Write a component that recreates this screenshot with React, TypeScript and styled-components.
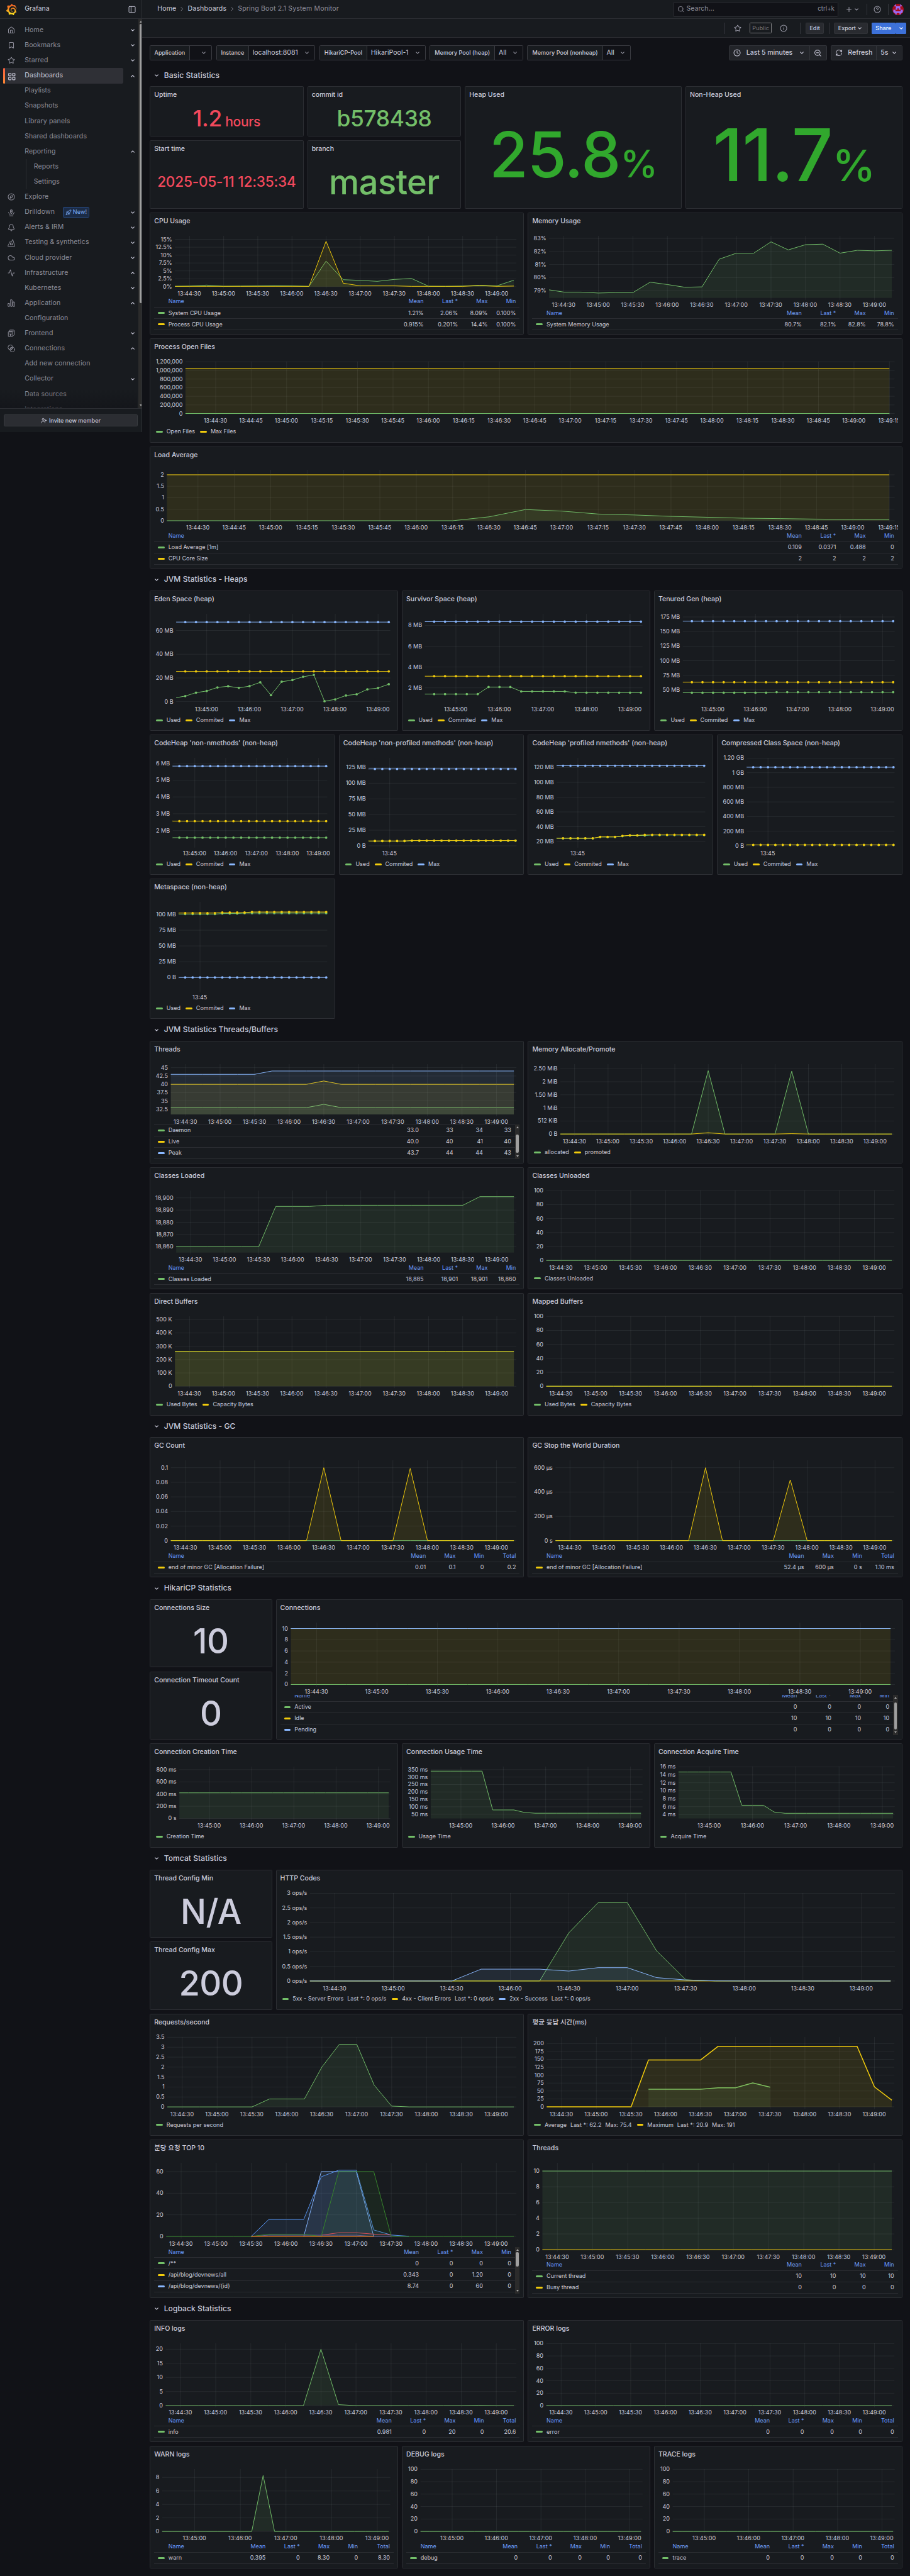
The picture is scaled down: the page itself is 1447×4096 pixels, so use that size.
import React from 'react';
import styled, { createGlobalStyle, css } from 'styled-components';
import {
  Activity,
  Bell,
  Bookmark,
  ChevronRight,
  Clock,
  Cloud,
  Compass,
  Home,
  Info,
  CircleHelp,
  LayoutGrid,
  Plus,
  RefreshCw,
  Rocket,
  Search,
  Star,
  UserPlus,
  ZoomOut,
} from 'lucide-react';
import { SiGrafana } from 'react-icons/si';

/* ---------- theme ---------- */

const c = {
  page: '#111217',
  panel: '#181b1f',
  border: '#2c2e33',
  control: '#3a3b41',
  text: '#ccccdc',
  muted: '#8e8e9a',
  link: '#6e9fff',
  green: '#73bf69',
  yellow: '#f2cc0c',
  blue: '#8ab8ff',
  darkGreen: '#37872d',
  midBlue: '#5794f2',
  red: '#f2495c',
  orange: '#ff780a',
  purple: '#705da0',
};

const GlobalStyle = createGlobalStyle`
  body { margin: 0; background: ${c.page}; overflow: hidden; }
  *, *::before, *::after { box-sizing: border-box; }
`;

const Root = styled.div`
  zoom: 0.753646;
  width: 1920px;
  display: flex;
  align-items: flex-start;
  background: ${c.page};
  color: ${c.text};
  font-family: Inter, 'Noto Sans CJK KR', 'Liberation Sans', sans-serif;
  font-size: 14px;
  line-height: 22px;
`;

/* ---------- small glyphs ---------- */

type ChevronProps = { up?: boolean; color?: string };
const Chevron = ({ up, color = c.text }: ChevronProps) => (
  <svg width="16" height="16" viewBox="0 0 16 16" fill="none" stroke={color} strokeWidth="1.5" strokeLinecap="round" strokeLinejoin="round">
    <path d={up ? 'M5 9.5L8 6.5l3 3' : 'M5 6.5L8 9.500l3-3'} />
  </svg>
);

const Line = ({ children, size = 16 }: { children: React.ReactNode; size?: number }) => (
  <svg width={size} height={size} viewBox="0 0 16 16" fill="none" stroke="currentColor" strokeWidth="1.25" strokeLinecap="round" strokeLinejoin="round">
    {children}
  </svg>
);

const DrilldownIcon = () => (
  <Line>
    <path d="M6.3 2.3L8 1l1.7 1.3v6L8 11.5 6.3 8.3zM6.3 4.6l3.4-1M6.3 7l3.4-1.2M2.2 7.5l1.6 4 1.8.7M13.8 7.5l-1.6 4-1.8.7M4.5 14.8h7" />
  </Line>
);
const K6Icon = () => (
  <Line>
    <path d="M.8 14.8L5.2 5.5l2.3 1.9L11 .9l4.2 13.9z" />
    <path d="M6 8.6v3.6M8 9l-1.9 1.8L8 12.2M10.6 8.6L9.4 10.6" />
    <circle cx="10.3" cy="11.3" r="1" />
  </Line>
);
const BarsIcon = () => (
  <Line>
    <rect x="1" y="8.6" width="3.4" height="6.4" rx=".5" />
    <rect x="6.3" y="1" width="3.4" height="14" rx=".5" />
    <rect x="11.6" y="5.6" width="3.4" height="9.4" rx=".5" />
  </Line>
);
const FrontendIcon = () => (
  <Line>
    <rect x="1.6" y="4.6" width="9.6" height="10.6" rx="1.2" />
    <path d="M4 4.4V2.6c0-.8.5-1.6 1.4-1.6h7.2c.9 0 1.6.7 1.6 1.6v8.2c0 .9-.7 1.6-1.6 1.6h-1.2M1.6 7.2h9.6M4.4 3h9.6" />
    <circle cx="6.4" cy="11.2" r="1.4" fill="currentColor" />
  </Line>
);
const ConnectionsIcon = () => (
  <Line>
    <circle cx="6" cy="5.8" r="5" />
    <circle cx="10" cy="10.2" r="5" />
    <circle cx="8" cy="8" r="1.9" />
  </Line>
);
const DockIcon = () => (
  <Line>
    <rect x="1.4" y="1.8" width="13.2" height="12.4" rx="1" />
    <path d="M5.8 1.8v12.4" />
  </Line>
);
const Avatar = () => (
  <svg width="24" height="24" viewBox="0 0 24 24">
    <clipPath id="avatar-clip">
      <circle cx="12" cy="12" r="12" />
    </clipPath>
    <g clipPath="url(#avatar-clip)">
      <rect width="24" height="24" fill="#a80d1c" />
      <path
        fill="#9a6bf5"
        d="M4.5 1h3v4.500h-3zM16.500 1h3v4.500h-3zM7.500 5h9v4.500h-9zM7 9h3.500v3.500H7zM13.500 9H17v3.500h-3.500zM2 12.500h4.500v6H2zM17.500 12.500H22v6h-4.500zM4 16h16v3.500H4zM6 19h3v4H6zM15 19h3v4h-3z"
      />
    </g>
  </svg>
);

/* ---------- side navigation ---------- */

const Side = styled.aside`
  width: 300px;
  height: 911px;
  flex: none;
  display: flex;
  flex-direction: column;
  background: ${c.panel};
  border-right: 1px solid ${c.border};
`;
const Brand = styled.div`
  height: 40px;
  flex: none;
  display: flex;
  align-items: center;
  padding: 0 12px 0 12px;
  gap: 18px;
  border-bottom: 1px solid ${c.border};
  & > svg:last-child {
    margin-left: auto;
  }
`;
const BrandName = styled.span`
  margin-left: -2px;
`;
const NavViewport = styled.div`
  position: relative;
  height: 823px;
  flex: none;
  display: flex;
  overflow: hidden;
  border-bottom: 1px solid ${c.border};
`;
const NavList = styled.nav`
  flex: 1;
  padding: 8px 4px 0 6px;
`;
const NavFade = styled.div`
  position: absolute;
  left: 0;
  right: 10px;
  bottom: 0;
  height: 40px;
  background: linear-gradient(rgba(17, 18, 23, 0), rgba(17, 18, 23, 0.55));
`;
const NavRow = styled.div`
  height: 32px;
  display: flex;
  align-items: center;
  color: ${c.muted};
`;
const NavLabel = styled.div<{ $active?: boolean; $child?: boolean }>`
  position: relative;
  width: 254px;
  height: 32px;
  display: flex;
  align-items: center;
  padding-left: ${(p) => (p.$child ? 15 : 10)}px;
  border-radius: 3px;
  letter-spacing: 0.01em;
  ${(p) =>
    p.$child &&
    css`
      width: 205px;
      margin-left: 49px;
      border-left: 1px solid ${c.border};
      border-radius: 0;
    `}
  ${(p) =>
    p.$active &&
    css`
      color: ${c.text};
      background: #2f3036;
      &::before {
        content: '';
        position: absolute;
        left: 0;
        top: 0;
        width: 4px;
        height: 100%;
        border-radius: 2px;
        background: linear-gradient(#f55f3e, #ff8833);
      }
    `}
`;
const NavIcon = styled.span`
  width: 36px;
  height: 16px;
  display: flex;
`;
const NewBadge = styled.span`
  display: flex;
  align-items: center;
  gap: 3px;
  height: 22px;
  margin-left: 17px;
  padding: 0 4px;
  border: 1px solid #274a7f;
  border-radius: 2px;
  background: #1b2b45;
  color: #7eb0ff;
  font-size: 12px;
`;
const NavChevron = styled.span`
  display: flex;
  margin-left: 12px;
`;
const ScrollTrack = styled.div<{ $h?: number }>`
  width: 10px;
  flex: none;
  ${(p) => p.$h && `height: ${p.$h}px;`}
  display: flex;
  flex-direction: column;
  align-items: center;
  background: #2b2b2b;
`;
const ScrollArrow = styled.span<{ $down?: boolean }>`
  width: 0;
  height: 0;
  margin: ${(p) => (p.$down ? 'auto 0 4px' : '4px 0 0')};
  border-left: 3.5px solid transparent;
  border-right: 3.5px solid transparent;
  ${(p) => (p.$down ? 'border-top' : 'border-bottom')}: 5px solid #a5a5a5;
`;
const ScrollThumb = styled.span<{ $top: number; $h: number }>`
  width: 6px;
  height: ${(p) => p.$h}px;
  margin-top: ${(p) => p.$top}px;
  border-radius: 3px;
  background: #9f9f9f;
`;
const SideFooter = styled.div`
  flex: 1;
  padding: 12px 8px;
`;
const InviteButton = styled.button`
  width: 100%;
  height: 24px;
  display: flex;
  align-items: center;
  justify-content: center;
  gap: 4px;
  border: 1px solid #393b40;
  border-radius: 2px;
  background: #2b2d32;
  color: ${c.text};
  font: 500 12px Inter, sans-serif;
`;

type NavEntry = { label: string; icon?: React.ReactNode; chev?: 'up' | 'down'; active?: boolean; child?: boolean; badge?: boolean };
const nav: NavEntry[] = [
  { label: 'Home', icon: <Home size={16} />, chev: 'down' },
  { label: 'Bookmarks', icon: <Bookmark size={16} />, chev: 'down' },
  { label: 'Starred', icon: <Star size={16} />, chev: 'down' },
  { label: 'Dashboards', icon: <LayoutGrid size={18} />, chev: 'up', active: true },
  { label: 'Playlists' },
  { label: 'Snapshots' },
  { label: 'Library panels' },
  { label: 'Shared dashboards' },
  { label: 'Reporting', chev: 'up' },
  { label: 'Reports', child: true },
  { label: 'Settings', child: true },
  { label: 'Explore', icon: <Compass size={16} /> },
  { label: 'Drilldown', icon: <DrilldownIcon />, chev: 'down', badge: true },
  { label: 'Alerts & IRM', icon: <Bell size={16} />, chev: 'down' },
  { label: 'Testing & synthetics', icon: <K6Icon />, chev: 'down' },
  { label: 'Cloud provider', icon: <Cloud size={16} />, chev: 'down' },
  { label: 'Infrastructure', icon: <Activity size={16} />, chev: 'up' },
  { label: 'Kubernetes', chev: 'down' },
  { label: 'Application', icon: <BarsIcon />, chev: 'up' },
  { label: 'Configuration' },
  { label: 'Frontend', icon: <FrontendIcon />, chev: 'down' },
  { label: 'Connections', icon: <ConnectionsIcon />, chev: 'up' },
  { label: 'Add new connection' },
  { label: 'Collector', chev: 'down' },
  { label: 'Data sources' },
  { label: 'Integrations' },
];

const Sidebar = () => (
  <Side>
    <Brand>
      <svg width="0" height="0" style={{ position: 'absolute' }}>
        <linearGradient id="brand" x1="0" y1="1" x2="0" y2="0">
          <stop offset="0" stopColor="#fcee1f" />
          <stop offset=".5" stopColor="#f7931e" />
          <stop offset="1" stopColor="#f15b2a" />
        </linearGradient>
      </svg>
      <SiGrafana size={24} fill="url(#brand)" />
      <BrandName>Grafana</BrandName>
      <DockIcon />
    </Brand>
    <NavViewport>
      <NavList>
        {nav.map((n) => (
          <NavRow key={n.label}>
            <NavLabel $active={n.active} $child={n.child}>
              {!n.child && <NavIcon>{n.icon}</NavIcon>}
              {n.label}
              {n.badge && (
                <NewBadge>
                  <Rocket size={13} />
                  New!
                </NewBadge>
              )}
            </NavLabel>
            {n.chev && (
              <NavChevron>
                <Chevron up={n.chev === 'up'} />
              </NavChevron>
            )}
          </NavRow>
        ))}
      </NavList>
      <ScrollTrack>
        <ScrollArrow />
        <ScrollThumb $top={3} $h={589} />
        <ScrollArrow $down />
      </ScrollTrack>
      <NavFade />
    </NavViewport>
    <SideFooter>
      <InviteButton>
        <UserPlus size={13} />
        Invite new member
      </InviteButton>
    </SideFooter>
  </Side>
);

/* ---------- top bars ---------- */

const Main = styled.main`
  flex: 1;
  min-width: 0;
  display: flex;
  flex-direction: column;
`;
const Bar = styled.header<{ $right?: number }>`
  height: 40px;
  display: flex;
  align-items: center;
  padding: 0 ${(p) => p.$right ?? 13}px 0 32px;
  background: ${c.panel};
  border-bottom: 1px solid ${c.border};
`;
const Crumbs = styled.div`
  display: flex;
  align-items: center;
  gap: 5px;
  margin-right: auto;
  svg {
    color: ${c.muted};
  }
`;
const Crumb = styled.span<{ $current?: boolean }>`
  color: ${(p) => (p.$current ? c.muted : c.text)};
  letter-spacing: 0.016em;
`;
const SearchBox = styled.div`
  width: 350px;
  height: 32px;
  display: flex;
  align-items: center;
  gap: 5px;
  padding: 0 7px 0 8px;
  border: 1px solid ${c.border};
  border-radius: 2px;
  background: ${c.page};
  color: ${c.muted};
`;
const Shortcut = styled.span`
  margin-left: auto;
  font-size: 13px;
`;
const Divider = styled.span<{ $l: number; $r: number }>`
  width: 1px;
  height: 24px;
  margin: 0 ${(p) => p.$r}px 0 ${(p) => p.$l}px;
  background: #34363c;
`;
const IconSlot = styled.span<{ $l?: number }>`
  display: flex;
  align-items: center;
  margin-left: ${(p) => p.$l ?? 0}px;
  color: #9d9dab;
`;
const Spacer = styled.span`
  margin-left: auto;
`;
const PublicTag = styled.span`
  height: 22px;
  margin: 0 17px 0 18px;
  padding: 0 4px;
  border: 1px solid #7f7f82;
  border-radius: 2px;
  color: #77777b;
  font-size: 12px;
  line-height: 20px;
  letter-spacing: 0.01em;
`;
const Button = styled.button<{ $primary?: boolean; $l?: number; $w: number }>`
  width: ${(p) => p.$w}px;
  height: 24px;
  margin-left: ${(p) => p.$l ?? 0}px;
  padding: 0;
  display: flex;
  align-items: center;
  justify-content: center;
  border: ${(p) => (p.$primary ? '0' : '1px solid #313338')};
  border-radius: 2px;
  background: ${(p) => (p.$primary ? '#3d71d9' : '#292b30')};
  color: ${(p) => (p.$primary ? '#fff' : c.text)};
  font: 500 12px Inter, sans-serif;
`;
const Controls = styled.div`
  height: 32px;
  margin: 16px 16px 16px;
  display: flex;
  gap: 9px;
`;
const Variable = styled.div`
  display: flex;
  height: 32px;
  border: 1px solid ${c.control};
  border-radius: 2px;
`;
const VarLabel = styled.span<{ $w: number }>`
  width: ${(p) => p.$w}px;
  display: flex;
  align-items: center;
  justify-content: center;
  background: ${c.panel};
  border-right: 1px solid ${c.control};
  font-size: 12px;
  font-weight: 500;
  white-space: nowrap;
`;
const VarValue = styled.span<{ $w: number }>`
  width: ${(p) => p.$w}px;
  padding: 0 8px;
  display: flex;
  align-items: center;
  justify-content: space-between;
`;
const Picker = styled.div<{ $auto?: boolean }>`
  display: flex;
  height: 32px;
  margin-left: ${(p) => (p.$auto ? 'auto' : '-1px')};
  border: 1px solid #33353b;
  border-radius: 2px;
  background: #222429;
`;
const PickerPart = styled.span<{ $w: number; $divide?: boolean }>`
  width: ${(p) => p.$w}px;
  padding: 0 8px;
  display: flex;
  align-items: center;
  justify-content: space-between;
  border-left: ${(p) => (p.$divide ? '1px solid #33353b' : '0')};
  font-weight: 500;
  white-space: nowrap;
`;

const variables = [
  { label: 'Application', value: '', lw: 83, vw: 46 },
  { label: 'Instance', value: 'localhost:8081', lw: 67, vw: 139 },
  { label: 'HikariCP-Pool', value: 'HikariPool-1', lw: 99, vw: 122 },
  { label: 'Memory Pool (heap)', value: 'All', lw: 136, vw: 58 },
  { label: 'Memory Pool (nonheap)', value: 'All', lw: 158, vw: 58 },
];

const TopBars = () => (
  <>
    <Bar>
      <Crumbs>
        <Crumb>Home</Crumb>
        <ChevronRight size={14} />
        <Crumb>Dashboards</Crumb>
        <ChevronRight size={14} />
        <Crumb $current>Spring Boot 2.1 System Monitor</Crumb>
      </Crumbs>
      <SearchBox>
        <Search size={15} />
        Search...
        <Shortcut>ctrl+k</Shortcut>
      </SearchBox>
      <IconSlot $l={14}>
        <Plus size={16} />
        <Chevron color="#9d9dab" />
      </IconSlot>
      <Divider $l={13} $r={14} />
      <IconSlot>
        <CircleHelp size={16} />
      </IconSlot>
      <Divider $l={14} $r={9} />
      <Avatar />
    </Bar>
    <Bar $right={8}>
      <Spacer />
      <Divider $l={0} $r={18} />
      <IconSlot>
        <Star size={16} />
      </IconSlot>
      <PublicTag>Public</PublicTag>
      <IconSlot>
        <Info size={16} />
      </IconSlot>
      <Divider $l={26} $r={12} />
      <Button $w={38}>Edit</Button>
      <Divider $l={12} $r={8} />
      <Button $w={72}>
        Export
        <Chevron />
      </Button>
      <Button $primary $l={8} $w={50}>
        Share
      </Button>
      <Button $primary $l={1} $w={22}>
        <Chevron color="#fff" />
      </Button>
    </Bar>
    <Controls>
      {variables.map((v) => (
        <Variable key={v.label}>
          <VarLabel $w={v.lw}>{v.label}</VarLabel>
          <VarValue $w={v.vw}>
            <span>{v.value}</span>
            <Chevron color={c.muted} />
          </VarValue>
        </Variable>
      ))}
      <Picker $auto>
        <PickerPart $w={169}>
          <Clock size={16} />
          Last 5 minutes
          <Chevron />
        </PickerPart>
        <PickerPart $w={35} $divide>
          <ZoomOut size={17} />
        </PickerPart>
      </Picker>
      <Picker>
        <PickerPart $w={95}>
          <RefreshCw size={16} />
          Refresh
        </PickerPart>
        <PickerPart $w={54} $divide>
          5s
          <Chevron />
        </PickerPart>
      </Picker>
    </Controls>
  </>
);

/* ---------- dashboard grid ---------- */

const COL = 66.5;
const ROW = 38;
const GAP = 8;

/* the track and gap fractions keep the zoomed sizes from rounding down row after row */
const Grid = styled.div`
  width: 1588px;
  margin: 0 0 16px 16px;
  display: grid;
  grid-template-columns: repeat(24, 58.5px);
  grid-auto-rows: 30.005px;
  gap: ${GAP + 0.01}px;
`;
const Section = styled.h2<{ $y: number }>`
  grid-column: 1 / 25;
  grid-row: ${(p) => p.$y + 1};
  margin: 0;
  padding-left: 6px;
  display: flex;
  align-items: center;
  gap: 8px;
  font-size: 16px;
  font-weight: 500;
  letter-spacing: 0.005em;
`;
type Pos = { x: number; y: number; w: number; h: number };
const Card = styled.section<{ $p: Pos }>`
  grid-column: ${(p) => p.$p.x + 1} / span ${(p) => p.$p.w};
  grid-row: ${(p) => p.$p.y + 1} / span ${(p) => p.$p.h};
  min-width: 0;
  min-height: 0;
  display: flex;
  flex-direction: column;
  border: 1px solid ${c.border};
  border-radius: 2px;
  background: ${c.panel};
  overflow: hidden;
`;
const CardTitle = styled.h3`
  height: 32px;
  flex: none;
  margin: 0;
  padding: 0 8px;
  font-size: 14px;
  font-weight: 500;
  line-height: 34px;
  white-space: nowrap;
`;
const CardBody = styled.div`
  height: 0;
  flex: 1;
  padding: 8px 8px;
  display: flex;
  flex-direction: column;
`;
const StatBody = styled.div<{ $color: string; $size: number }>`
  flex: 1;
  display: flex;
  align-items: center;
  justify-content: center;
  color: ${(p) => p.$color};
  font-size: ${(p) => p.$size}px;
  font-weight: 500;
  line-height: 1;
  letter-spacing: -0.01em;
  white-space: pre;
`;
const Unit = styled.span<{ $size: number }>`
  font-size: ${(p) => p.$size}px;
`;

/* ---------- legends ---------- */

const Swatch = styled.span<{ $color: string }>`
  width: 14px;
  height: 4px;
  flex: none;
  border-radius: 2px;
  background: ${(p) => p.$color};
`;
const LegendList = styled.div`
  height: 28px;
  flex: none;
  padding-left: 4px;
  display: flex;
  align-items: center;
  gap: 11px;
  font-size: 12px;
`;
const LegendItem = styled.span`
  display: flex;
  align-items: center;
  gap: 8px;
  white-space: nowrap;
`;
const LegendFrame = styled.div<{ $h: number }>`
  height: ${(p) => p.$h}px;
  flex: none;
  display: flex;
  overflow: hidden;
`;
const LegendTable = styled.div<{ $shift: number }>`
  flex: 1;
  margin-top: ${(p) => -p.$shift}px;
  font-size: 12px;
`;
const WIDTHS: Record<string, number> = { Mean: 60, 'Last *': 72.3, Max: 62.8, Min: 59.7, Total: 67.5 };
const LegendRow = styled.div<{ $cols: string[]; $head?: boolean }>`
  height: 24px;
  display: grid;
  grid-template-columns: 8px 22px 1fr ${(p) => p.$cols.map((k) => `${WIDTHS[k]}px`).join(' ')};
  align-items: center;
  padding-right: 8px;
  border-bottom: 1px solid #2b2d32;
  color: ${(p) => (p.$head ? c.link : c.text)};
  white-space: nowrap;
  & > span:nth-child(n + 4) {
    text-align: right;
  }
`;

/* ---------- chart ---------- */

type Series = { color: string; data: (number | null)[]; fill?: boolean; width?: number };
type Legend =
  | { kind: 'list'; items: [string, string][] }
  | { kind: 'table'; cols: string[]; rows: [string, string, ...string[]][]; view?: number; shift?: number; thumb?: [number, number] };
type ChartSpec = {
  left: number;
  /* first and last y tick: value, offset from the panel top */
  y: [number, number, number, number];
  labels: string[];
  step: number;
  dots?: boolean;
  series: Series[];
};

const T0 = 2.2;
const clock = (s: number, short: boolean) => {
  const t = 44 * 60 + 15 + s;
  const mm = Math.floor(t / 60);
  const ss = String(t % 60).padStart(2, '0');
  return short ? `13:${mm}` : `13:${mm}:${ss}`;
};

const Svg = styled.svg`
  display: block;
  flex: none;
  text {
    font-family: Inter, sans-serif;
    font-size: 12px;
    fill: ${c.text};
  }
`;

const Plot = ({ id, spec, w, h, axis }: { id: string; spec: ChartSpec; w: number; h: number; axis: number }) => {
  const left = spec.left - 9;
  const right = w - 7.5;
  const top = 8;
  const bottom = h - axis;
  const [v1, y1, v2, y2] = spec.y;
  const px = (i: number) => left + ((15 * i - T0) / 300) * (right - left);
  const py = (v: number) => y1 - 41 + ((v1 - v) / (v1 - v2)) * (y2 - y1);
  const n = spec.labels.length;
  const short = spec.step === 0;
  const ticks: number[] = [];
  if (short) ticks.push(45);
  else for (let s = 15; s <= 300; s += 15) if ((s + 15) % spec.step === 0) ticks.push(s);

  const runs = (data: (number | null)[]) => {
    const out: [number, number][][] = [];
    let cur: [number, number][] = [];
    data.forEach((v, i) => {
      if (v === null) {
        if (cur.length) out.push(cur);
        cur = [];
      } else cur.push([px(i), py(v)]);
    });
    if (cur.length) out.push(cur);
    return out;
  };
  const path = (r: [number, number][]) => 'M' + r.map(([x, y]) => `${x.toFixed(1)} ${y.toFixed(1)}`).join('L');

  return (
    <Svg width={w} height={h}>
      <clipPath id={id}>
        <rect x={left} y={0} width={right - left + 6} height={bottom + 4} />
      </clipPath>
      {spec.labels.map((l, i) => {
        const y = y1 - 41 + ((y2 - y1) * i) / (n - 1);
        return (
          <g key={l}>
            <line x1={left} x2={right} y1={y} y2={y} stroke="rgba(240,250,255,.09)" />
            <text x={left - 6} y={y + 4} textAnchor="end">
              {l}
            </text>
          </g>
        );
      })}
      {ticks.map((s) => (
        <g key={s}>
          <line x1={px(s / 15)} x2={px(s / 15)} y1={top} y2={bottom + 4} stroke="rgba(240,250,255,.09)" />
          <text x={px(s / 15) - 0.5} y={bottom + 19.5} textAnchor="middle">
            {clock(s, short)}
          </text>
        </g>
      ))}
      <g clipPath={`url(#${id})`}>
        {spec.series.map((s, k) => (
          <g key={k}>
            {runs(s.data).map((r, j) => (
              <g key={j}>
                {s.fill !== false && !spec.dots && (
                  <path d={`${path(r)}L${r[r.length - 1][0]} ${bottom}L${r[0][0]} ${bottom}Z`} fill={s.color} fillOpacity=".1" />
                )}
                <path d={path(r)} fill="none" stroke={s.color} strokeWidth={s.width ?? 1.3} strokeLinejoin="round" />
                {spec.dots && r.map(([x, y], i) => <circle key={i} cx={x} cy={y} r="2.5" fill={s.color} />)}
              </g>
            ))}
          </g>
        ))}
      </g>
    </Svg>
  );
};

const LegendView = ({ legend }: { legend: Legend }) => {
  if (legend.kind === 'list') {
    return (
      <LegendList>
        {legend.items.map(([color, label]) => (
          <LegendItem key={label}>
            <Swatch $color={color} />
            {label.split('|').map((part) => (
              <span key={part}>{part}</span>
            ))}
          </LegendItem>
        ))}
      </LegendList>
    );
  }
  const h = legend.view ?? 24 * (legend.rows.length + 1);
  return (
    <LegendFrame $h={h}>
      <LegendTable $shift={legend.shift ?? 0}>
        <LegendRow $cols={legend.cols} $head>
          <span />
          <span />
          <span>Name</span>
          {legend.cols.map((k) => (
            <span key={k}>{k}</span>
          ))}
        </LegendRow>
        {legend.rows.map(([color, name, ...vals]) => (
          <LegendRow key={name} $cols={legend.cols}>
            <span />
            <Swatch $color={color} />
            <span>{name}</span>
            {vals.map((v, i) => (
              <span key={i}>{v}</span>
            ))}
          </LegendRow>
        ))}
      </LegendTable>
      {legend.thumb && (
        <ScrollTrack $h={h}>
          <ScrollArrow />
          <ScrollThumb $top={legend.thumb[0] - 9} $h={legend.thumb[1]} />
          <ScrollArrow $down />
        </ScrollTrack>
      )}
    </LegendFrame>
  );
};

const ChartPanel = ({ title, p, spec, legend }: { title: string; p: Pos; spec: ChartSpec; legend: Legend }) => {
  const lh = legend.kind === 'list' ? 28 : legend.view ?? 24 * (legend.rows.length + 1);
  const w = COL * p.w - GAP - 18;
  const h = ROW * p.h - GAP - 50 - lh;
  return (
    <Card $p={p}>
      <CardTitle>{title}</CardTitle>
      <CardBody>
        <Plot id={`plot-${p.x}-${p.y}`} spec={spec} w={w} h={h} axis={legend.kind === 'list' ? 24.5 : 21} />
        <LegendView legend={legend} />
      </CardBody>
    </Card>
  );
};

const StatPanel = ({ title, p, color = c.text, size, value, unit, unitSize = 0 }: { title: string; p: Pos; color?: string; size: number; value: string; unit?: string; unitSize?: number }) => (
  <Card $p={p}>
    <CardTitle>{title}</CardTitle>
    <StatBody $color={color} $size={size}>
      <span>
        {value}
        {unit && <Unit $size={unitSize}>{unit}</Unit>}
      </span>
    </StatBody>
  </Card>
);

/* ---------- data: one sample every 15 s, 21 samples ---------- */

const N = 21;
const flat = (v: number) => Array<number>(N).fill(v);
/* steps([[value, count], ...]): a missing count fills up to the last sample */
const steps = (parts: [number, number?][]) =>
  parts.reduce<number[]>((out, [v, n]) => out.concat(Array<number>(n ?? N - out.length).fill(v)), []);
const spikes = (base: number, at: Record<number, number>) => flat(base).map((v, i) => at[i] ?? v);
const only = (from: number, vals: number[]) =>
  Array.from({ length: N }, (_, i) => (i >= from && i < from + vals.length ? vals[i - from] : null));

const g = (data: (number | null)[], extra = {}): Series => ({ color: c.green, data, ...extra });
const y = (data: (number | null)[], extra = {}): Series => ({ color: c.yellow, data, ...extra });
const b = (data: (number | null)[], extra = {}): Series => ({ color: c.blue, data, ...extra });

const M4 = ['Mean', 'Last *', 'Max', 'Min'];
const M5 = ['Mean', 'Last *', 'Max', 'Min', 'Total'];
const MT = ['Mean', 'Max', 'Min', 'Total'];
const heapLegend: Legend = { kind: 'list', items: [[c.green, 'Used'], [c.yellow, 'Commited'], [c.blue, 'Max']] };
const hundred = ['100', '80', '60', '40', '20', '0'];

type PanelDef = { title: string; p: Pos; spec: ChartSpec; legend: Legend };
const charts: PanelDef[] = [
  {
    title: 'CPU Usage',
    p: { x: 0, y: 8, w: 12, h: 7 },
    spec: {
      left: 53, y: [15, 56.3, 0, 156.2], step: 30,
      labels: ['15%', '12.5%', '10%', '7.5%', '5%', '2.5%', '0%'],
      series: [
        g([0.1, 0.2, 0.5, 0.15, 0.2, 0.25, 0.35, 0.25, 0.1, 8.09, 2.2, 2, 1.7, 2.3, 2.6, 0.15, 0.1, 0.2, 0.45, 0.25, 2.06]),
        y(spikes(0.1, { 9: 14.4, 10: 1.1, 11: 0.25, 12: 0.25, 13: 0.25, 18: 0.35, 20: 0.2 })),
      ],
    },
    legend: { kind: 'table', cols: M4, rows: [[c.green, 'System CPU Usage', '1.21%', '2.06%', '8.09%', '0.100%'], [c.yellow, 'Process CPU Usage', '0.915%', '0.201%', '14.4%', '0.100%']] },
  },
  {
    title: 'Memory Usage',
    p: { x: 12, y: 8, w: 12, h: 7 },
    spec: {
      left: 45, y: [83, 54.4, 79, 164.6], step: 30,
      labels: ['83%', '82%', '81%', '80%', '79%'],
      series: [g([79.09, 78.89, 78.89, 78.82, 78.85, 78.85, 79.65, 79.47, 79.26, 79.29, 81.41, 81.87, 81.87, 82.74, 82.12, 82.52, 82.56, 81.87, 82.09, 82.05, 82.09])],
    },
    legend: { kind: 'table', cols: M4, rows: [[c.green, 'System Memory Usage', '80.7%', '82.1%', '82.8%', '78.8%']] },
  },
  {
    title: 'Process Open Files',
    p: { x: 0, y: 15, w: 24, h: 6 },
    spec: {
      left: 75.2, y: [1200000, 49.3, 0, 158.5], step: 15,
      labels: ['1,200,000', '1,000,000', '800,000', '600,000', '400,000', '200,000', '0'],
      series: [y(flat(1048576)), g(flat(0))],
    },
    legend: { kind: 'list', items: [[c.green, 'Open Files'], [c.yellow, 'Max Files']] },
  },
  {
    title: 'Load Average',
    p: { x: 0, y: 21, w: 24, h: 7 },
    spec: {
      left: 36.1, y: [2, 59.5, 0, 156.4], step: 15,
      labels: ['2', '1.5', '1', '0.5', '0'],
      series: [y(flat(2)), g([0, 0, 0, 0, 0, 0, 0, 0, 0, 0.17, 0.488, 0.42, 0.29, 0.25, 0.19, 0.15, 0.11, 0.09, 0.07, 0.06, 0.04])],
    },
    legend: { kind: 'table', cols: M4, rows: [[c.green, 'Load Average [1m]', '0.109', '0.0371', '0.488', '0'], [c.yellow, 'CPU Core Size', '2', '2', '2', '2']] },
  },
  {
    title: 'Eden Space (heap)',
    p: { x: 0, y: 29, w: 8, h: 8 },
    spec: {
      left: 55.6, y: [60, 84.2, 0, 234.3], step: 60, dots: true,
      labels: ['60 MB', '40 MB', '20 MB', '0 B'],
      series: [
        g([3.1, 4.7, 7.6, 9, 12, 13, 11.6, 13.1, 16.3, 5.5, 16.8, 18.2, 21, 22.6, 0.4, 1.9, 5.2, 6.2, 10.4, 11.5, 14.7]),
        y(flat(25.5)),
        b(flat(67.1)),
      ],
    },
    legend: heapLegend,
  },
  {
    title: 'Survivor Space (heap)',
    p: { x: 8, y: 29, w: 8, h: 8 },
    spec: {
      left: 48.3, y: [8, 73.4, 2, 205.2], step: 60, dots: true,
      labels: ['8 MB', '6 MB', '4 MB', '2 MB'],
      series: [g(steps([[1.4, 6], [2.08, 3], [1.66, 5], [1.54]])), y(flat(3.12)), b(flat(8.36))],
    },
    legend: heapLegend,
  },
  {
    title: 'Tenured Gen (heap)',
    p: { x: 16, y: 29, w: 8, h: 8 },
    spec: {
      left: 60.5, y: [175, 55.6, 50, 209.5], step: 60, dots: true,
      labels: ['175 MB', '150 MB', '125 MB', '100 MB', '75 MB', '50 MB'],
      series: [g(steps([[45.2, 9], [46.1]])), y(flat(63.2)), b(flat(167.8))],
    },
    legend: heapLegend,
  },
  {
    title: "CodeHeap 'non-nmethods' (non-heap)",
    p: { x: 0, y: 37, w: 6, h: 8 },
    spec: {
      left: 48.4, y: [6, 60.4, 2, 202.5], step: 60, dots: true,
      labels: ['6 MB', '5 MB', '4 MB', '3 MB', '2 MB'],
      series: [g(flat(1.58)), y(flat(2.56)), b(flat(5.83))],
    },
    legend: heapLegend,
  },
  {
    title: "CodeHeap 'non-profiled nmethods' (non-heap)",
    p: { x: 6, y: 37, w: 6, h: 8 },
    spec: {
      left: 62.2, y: [125, 69.5, 0, 234.6], step: 0, dots: true,
      labels: ['125 MB', '100 MB', '75 MB', '50 MB', '25 MB', '0 B'],
      series: [g(steps([[7.5, 6], [8.2]])), y(steps([[7.7, 6], [8.4]])), b(flat(122.8))],
    },
    legend: heapLegend,
  },
  {
    title: "CodeHeap 'profiled nmethods' (non-heap)",
    p: { x: 12, y: 37, w: 6, h: 8 },
    spec: {
      left: 61, y: [120, 69.5, 20, 225.5], step: 0, dots: true,
      labels: ['120 MB', '100 MB', '80 MB', '60 MB', '40 MB', '20 MB'],
      series: [g(steps([[24.2, 6], [26.1, 3], [27.2, 1], [28.1, 3], [28.7]])), y(steps([[24.4, 6], [26.3, 3], [27.6, 1], [28.4, 2], [29]])), b(flat(122.5))],
    },
    legend: heapLegend,
  },
  {
    title: 'Compressed Class Space (non-heap)',
    p: { x: 18, y: 37, w: 6, h: 8 },
    spec: {
      left: 63, y: [1.2, 49.5, 0, 234.6], step: 0, dots: true,
      labels: ['1.20 GB', '1 GB', '800 MB', '600 MB', '400 MB', '200 MB', '0 B'],
      series: [g(flat(0.012)), y(flat(0.0125)), b(flat(1.075))],
    },
    legend: heapLegend,
  },
  {
    title: 'Metaspace (non-heap)',
    p: { x: 0, y: 45, w: 6, h: 8 },
    spec: {
      left: 61.3, y: [100, 75.5, 0, 208.5], step: 0, dots: true,
      labels: ['100 MB', '75 MB', '50 MB', '25 MB', '0 B'],
      series: [g(steps([[100.6, 6], [101.4, 3], [102.1]])), y(steps([[102.2, 6], [103, 4], [103.9]])), b(flat(0))],
    },
    legend: heapLegend,
  },
  {
    title: 'Threads',
    p: { x: 0, y: 54, w: 12, h: 7 },
    spec: {
      left: 44.3, y: [45, 56.5, 32.5, 144.3], step: 30,
      labels: ['45', '42.5', '40', '37.5', '35', '32.5'],
      series: [g(spikes(33, { 9: 34 })), y(spikes(40, { 9: 41 })), b(steps([[43, 6], [44]]))],
    },
    legend: {
      kind: 'table', cols: M4, view: 73, shift: 22.5, thumb: [23, 38],
      rows: [[c.green, 'Daemon', '33.0', '33', '34', '33'], [c.yellow, 'Live', '40.0', '40', '41', '40'], [c.blue, 'Peak', '43.7', '44', '44', '43']],
    },
  },
  {
    title: 'Memory Allocate/Promote',
    p: { x: 12, y: 54, w: 12, h: 7 },
    spec: {
      left: 68.8, y: [2.5, 58.5, 0, 196.5], step: 30,
      labels: ['2.50 MiB', '2 MiB', '1.50 MiB', '1 MiB', '512 KiB', '0 B'],
      series: [g(spikes(0, { 9: 2.42, 14: 2.4 })), y(spikes(0, { 9: 0.05, 14: 0.015 }))],
    },
    legend: { kind: 'list', items: [[c.green, 'allocated'], [c.yellow, 'promoted']] },
  },
  {
    title: 'Classes Loaded',
    p: { x: 0, y: 61, w: 12, h: 7 },
    spec: {
      left: 55.6, y: [18900, 64.5, 18860, 167.5], step: 30,
      labels: ['18,900', '18,890', '18,880', '18,870', '18,860'],
      series: [g(steps([[18860, 6], [18893, 3], [18894, 9], [18901]]))],
    },
    legend: { kind: 'table', cols: M4, rows: [[c.green, 'Classes Loaded', '18,885', '18,901', '18,901', '18,860']] },
  },
  {
    title: 'Classes Unloaded',
    p: { x: 12, y: 61, w: 12, h: 7 },
    spec: { left: 39, y: [100, 49.3, 0, 196.5], step: 30, labels: hundred, series: [g(flat(0))] },
    legend: { kind: 'list', items: [[c.green, 'Classes Unloaded']] },
  },
  {
    title: 'Direct Buffers',
    p: { x: 0, y: 68, w: 12, h: 7 },
    spec: {
      left: 53, y: [500, 55.8, 0, 196.6], step: 30,
      labels: ['500 K', '400 K', '300 K', '200 K', '100 K', '0'],
      series: [g(flat(260)), y(flat(260))],
    },
    legend: { kind: 'list', items: [[c.green, 'Used Bytes'], [c.yellow, 'Capacity Bytes']] },
  },
  {
    title: 'Mapped Buffers',
    p: { x: 12, y: 68, w: 12, h: 7 },
    spec: { left: 39, y: [100, 49.3, 0, 196.5], step: 30, labels: hundred, series: [g(flat(0)), y(flat(0))] },
    legend: { kind: 'list', items: [[c.green, 'Used Bytes'], [c.yellow, 'Capacity Bytes']] },
  },
  {
    title: 'GC Count',
    p: { x: 0, y: 76, w: 12, h: 8 },
    spec: {
      left: 44.3, y: [0.1, 64.5, 0, 218.4], step: 30,
      labels: ['0.1', '0.08', '0.06', '0.04', '0.02', '0'],
      series: [g(flat(0)), y(spikes(0, { 9: 0.1, 14: 0.099 }))],
    },
    legend: { kind: 'table', cols: MT, rows: [[c.yellow, 'end of minor GC [Allocation Failure]', '0.01', '0.1', '0', '0.2']] },
  },
  {
    title: 'GC Stop the World Duration',
    p: { x: 12, y: 76, w: 12, h: 8 },
    spec: {
      left: 58.5, y: [600, 64.5, 0, 218.4], step: 30,
      labels: ['600 µs', '400 µs', '200 µs', '0 s'],
      series: [g(flat(0)), y(spikes(0, { 9: 600, 14: 500 }))],
    },
    legend: { kind: 'table', cols: MT, rows: [[c.yellow, 'end of minor GC [Allocation Failure]', '52.4 µs', '600 µs', '0 s', '1.10 ms']] },
  },
  {
    title: 'Connections',
    p: { x: 4, y: 85, w: 20, h: 8 },
    spec: {
      left: 30.9, y: [10, 61.6, 0, 179.6], step: 30,
      labels: ['10', '8', '6', '4', '2', '0'],
      series: [y(flat(10)), b(flat(10), { fill: false }), g(flat(0))],
    },
    legend: {
      kind: 'table', cols: M4, view: 86, shift: 9.5, thumb: [18, 56],
      rows: [[c.green, 'Active', '0', '0', '0', '0'], [c.yellow, 'Idle', '10', '10', '10', '10'], [c.blue, 'Pending', '0', '0', '0', '0']],
    },
  },
  {
    title: 'Connection Creation Time',
    p: { x: 0, y: 93, w: 8, h: 6 },
    spec: { left: 62.3, y: [800, 55.4, 0, 158.4], step: 60, labels: ['800 ms', '600 ms', '400 ms', '200 ms', '0 s'], series: [g(flat(420))] },
    legend: { kind: 'list', items: [[c.green, 'Creation Time']] },
  },
  {
    title: 'Connection Usage Time',
    p: { x: 8, y: 93, w: 8, h: 6 },
    spec: {
      left: 60.6, y: [350, 55.4, 50, 149.5], step: 60,
      labels: ['350 ms', '300 ms', '250 ms', '200 ms', '150 ms', '100 ms', '50 ms'],
      series: [g(steps([[340, 6], [79, 3], [62, 1], [57]]))],
    },
    legend: { kind: 'list', items: [[c.green, 'Usage Time']] },
  },
  {
    title: 'Connection Acquire Time',
    p: { x: 16, y: 93, w: 8, h: 6 },
    spec: {
      left: 51.3, y: [16, 49.5, 4, 150.3], step: 60,
      labels: ['16 ms', '14 ms', '12 ms', '10 ms', '8 ms', '6 ms', '4 ms'],
      series: [g(steps([[14.7, 6], [6.36, 3], [4.65, 1], [4.33]]))],
    },
    legend: { kind: 'list', items: [[c.green, 'Acquire Time']] },
  },
  {
    title: 'HTTP Codes',
    p: { x: 4, y: 100, w: 20, h: 8 },
    spec: {
      left: 71, y: [3, 49.6, 0, 234.6], step: 30,
      labels: ['3 ops/s', '2.5 ops/s', '2 ops/s', '1.5 ops/s', '1 ops/s', '0.5 ops/s', '0 ops/s'],
      series: [
        g(spikes(0, { 9: 1.65, 10: 2.68, 11: 2.68, 12: 1.03, 13: 0.04 })),
        y(flat(0)),
        b(spikes(0, { 6: 0.405, 7: 0.405, 8: 0.405, 9: 0.34, 10: 0.455, 11: 0.455, 12: 0.115, 13: 0.035, 14: 0.005 })),
      ],
    },
    legend: { kind: 'list', items: [[c.green, '5xx - Server Errors|Last *: 0 ops/s'], [c.yellow, '4xx - Client Errors|Last *: 0 ops/s'], [c.blue, '2xx - Success|Last *: 0 ops/s']] },
  },
  {
    title: 'Requests/second',
    p: { x: 0, y: 108, w: 12, h: 7 },
    spec: {
      left: 37, y: [3.5, 49.4, 0, 196.4], step: 30,
      labels: ['3.5', '3', '2.5', '2', '1.5', '1', '0.5', '0'],
      series: [g(spikes(0, { 6: 0.4, 7: 0.4, 8: 0.4, 9: 2, 10: 3.14, 11: 3.14, 12: 1.09, 13: 0.04 }))],
    },
    legend: { kind: 'list', items: [[c.green, 'Requests per second']] },
  },
  {
    title: '평균 응답 시간(ms)',
    p: { x: 12, y: 108, w: 12, h: 7 },
    spec: {
      left: 40, y: [200, 62.6, 0, 196.2], step: 30,
      labels: ['200', '175', '150', '125', '100', '75', '50', '25', '0'],
      series: [
        g(only(6, [55.4, 55.4, 55.4, 55.4, 60, 60, 75.4, 62.2]), { width: 2 }),
        y([0, 0, 0, 0, 0, 0, 148, 148, 148, 148, 191, 191, 191, 191, 191, 191, 191, 191, 191, 63, 20.9], { width: 2 }),
      ],
    },
    legend: { kind: 'list', items: [[c.green, 'Average|Last *: 62.2|Max: 75.4'], [c.yellow, 'Maximum|Last *: 20.9|Max: 191']] },
  },
  {
    title: '분당 요청 TOP 10',
    p: { x: 0, y: 115, w: 12, h: 9 },
    spec: {
      left: 34.6, y: [60, 67.5, 0, 204.3], step: 30,
      labels: ['60', '40', '20', '0'],
      series: [
        b(only(8, [0, 60, 60, 60, 0])),
        { color: c.midBlue, data: only(5, [0, 15.7, 15.7, 15.7, 55.2, 61.3, 61.3, 6, 1.3, 0.2]) },
        { color: c.red, data: only(9, [1.2, 3.4, 3.4, 2.1, 1.3]), fill: false },
        { color: c.purple, data: only(5, [0, 1.2, 1.2, 1.2, 1.2, 1.2, 1.2, 0, 0]) },
        { color: c.darkGreen, data: spikes(0, { 6: 2.1, 7: 2.1, 8: 2.1, 10: 60, 11: 60, 12: 60 }) },
        { color: c.orange, data: only(5, [0, 0, 0, 0, 0, 0, 0, 0]) },
      ],
    },
    legend: {
      kind: 'table', cols: M4, view: 99, shift: 0.5, thumb: [12, 31],
      rows: [[c.green, '/**', '0', '0', '0', '0'], [c.yellow, '/api/blog/devnews/all', '0.343', '0', '1.20', '0'], [c.blue, '/api/blog/devnews/{id}', '8.74', '0', '60', '0']],
    },
  },
  {
    title: 'Threads',
    p: { x: 12, y: 115, w: 12, h: 9 },
    spec: { left: 30.8, y: [10, 66.3, 0, 232.2], step: 30, labels: ['10', '8', '6', '4', '2', '0'], series: [g(flat(10)), y(flat(0))] },
    legend: { kind: 'table', cols: M4, rows: [[c.green, 'Current thread', '10', '10', '10', '10'], [c.yellow, 'Busy thread', '0', '0', '0', '0']] },
  },
  {
    title: 'INFO logs',
    p: { x: 0, y: 125, w: 12, h: 7 },
    spec: { left: 33.5, y: [20, 61.4, 0, 180.5], step: 30, labels: ['20', '15', '10', '5', '0'], series: [g(spikes(0, { 9: 20, 10: 0.35, 18: 0.15 }))] },
    legend: { kind: 'table', cols: M5, rows: [[c.green, 'info', '0.981', '0', '20', '0', '20.6']] },
  },
  {
    title: 'ERROR logs',
    p: { x: 12, y: 125, w: 12, h: 7 },
    spec: { left: 39, y: [100, 49.4, 0, 180.5], step: 30, labels: hundred, series: [g(flat(0))] },
    legend: { kind: 'table', cols: M5, rows: [[c.green, 'error', '0', '0', '0', '0', '0']] },
  },
  {
    title: 'WARN logs',
    p: { x: 0, y: 132, w: 8, h: 7 },
    spec: { left: 26, y: [8, 66.6, 0, 180.5], step: 60, labels: ['8', '6', '4', '2', '0'], series: [g(spikes(0, { 9: 8.3 }))] },
    legend: { kind: 'table', cols: M5, rows: [[c.green, 'warn', '0.395', '0', '8.30', '0', '8.30']] },
  },
  {
    title: 'DEBUG logs',
    p: { x: 8, y: 132, w: 8, h: 7 },
    spec: { left: 39, y: [100, 49.4, 0, 180.5], step: 60, labels: hundred, series: [g(flat(0))] },
    legend: { kind: 'table', cols: M5, rows: [[c.green, 'debug', '0', '0', '0', '0', '0']] },
  },
  {
    title: 'TRACE logs',
    p: { x: 16, y: 132, w: 8, h: 7 },
    spec: { left: 39, y: [100, 49.4, 0, 180.5], step: 60, labels: hundred, series: [g(flat(0))] },
    legend: { kind: 'table', cols: M5, rows: [[c.green, 'trace', '0', '0', '0', '0', '0']] },
  },
];

const sections: [number, string][] = [
  [0, 'Basic Statistics'],
  [28, 'JVM Statistics - Heaps'],
  [53, 'JVM Statistics Threads/Buffers'],
  [75, 'JVM Statistics - GC'],
  [84, 'HikariCP Statistics'],
  [99, 'Tomcat Statistics'],
  [124, 'Logback Statistics'],
];

const HEAP_GREEN = '#31a82d';

export default function App() {
  return (
    <>
      <GlobalStyle />
      <Root>
        <Sidebar />
        <Main>
          <TopBars />
          <Grid>
            {sections.map(([row, label]) => (
              <Section key={label} $y={row}>
                <Chevron />
                {label}
              </Section>
            ))}
            <StatPanel title="Uptime" p={{ x: 0, y: 1, w: 5, h: 3 }} color={c.red} size={47} value="1.2" unit=" hours" unitSize={28} />
            <StatPanel title="Start time" p={{ x: 0, y: 4, w: 5, h: 4 }} color={c.red} size={30} value="2025-05-11 12:35:34" />
            <StatPanel title="commit id" p={{ x: 5, y: 1, w: 5, h: 3 }} color={c.green} size={47} value="b578438" />
            <StatPanel title="branch" p={{ x: 5, y: 4, w: 5, h: 4 }} color={c.green} size={72} value="master" />
            <StatPanel title="Heap Used" p={{ x: 10, y: 1, w: 7, h: 7 }} color={HEAP_GREEN} size={133} value="25.8" unit="%" unitSize={80} />
            <StatPanel title="Non-Heap Used" p={{ x: 17, y: 1, w: 7, h: 7 }} color={HEAP_GREEN} size={153} value="11.7" unit="%" unitSize={92} />
            <StatPanel title="Connections Size" p={{ x: 0, y: 85, w: 4, h: 4 }} size={72} value="10" />
            <StatPanel title="Connection Timeout Count" p={{ x: 0, y: 89, w: 4, h: 4 }} size={72} value="0" />
            <StatPanel title="Thread Config Min" p={{ x: 0, y: 100, w: 4, h: 4 }} size={72} value="N/A" />
            <StatPanel title="Thread Config Max" p={{ x: 0, y: 104, w: 4, h: 4 }} size={72} value="200" />
            {charts.map((d) => (
              <ChartPanel key={`${d.p.x}-${d.p.y}`} {...d} />
            ))}
          </Grid>
        </Main>
      </Root>
    </>
  );
}
